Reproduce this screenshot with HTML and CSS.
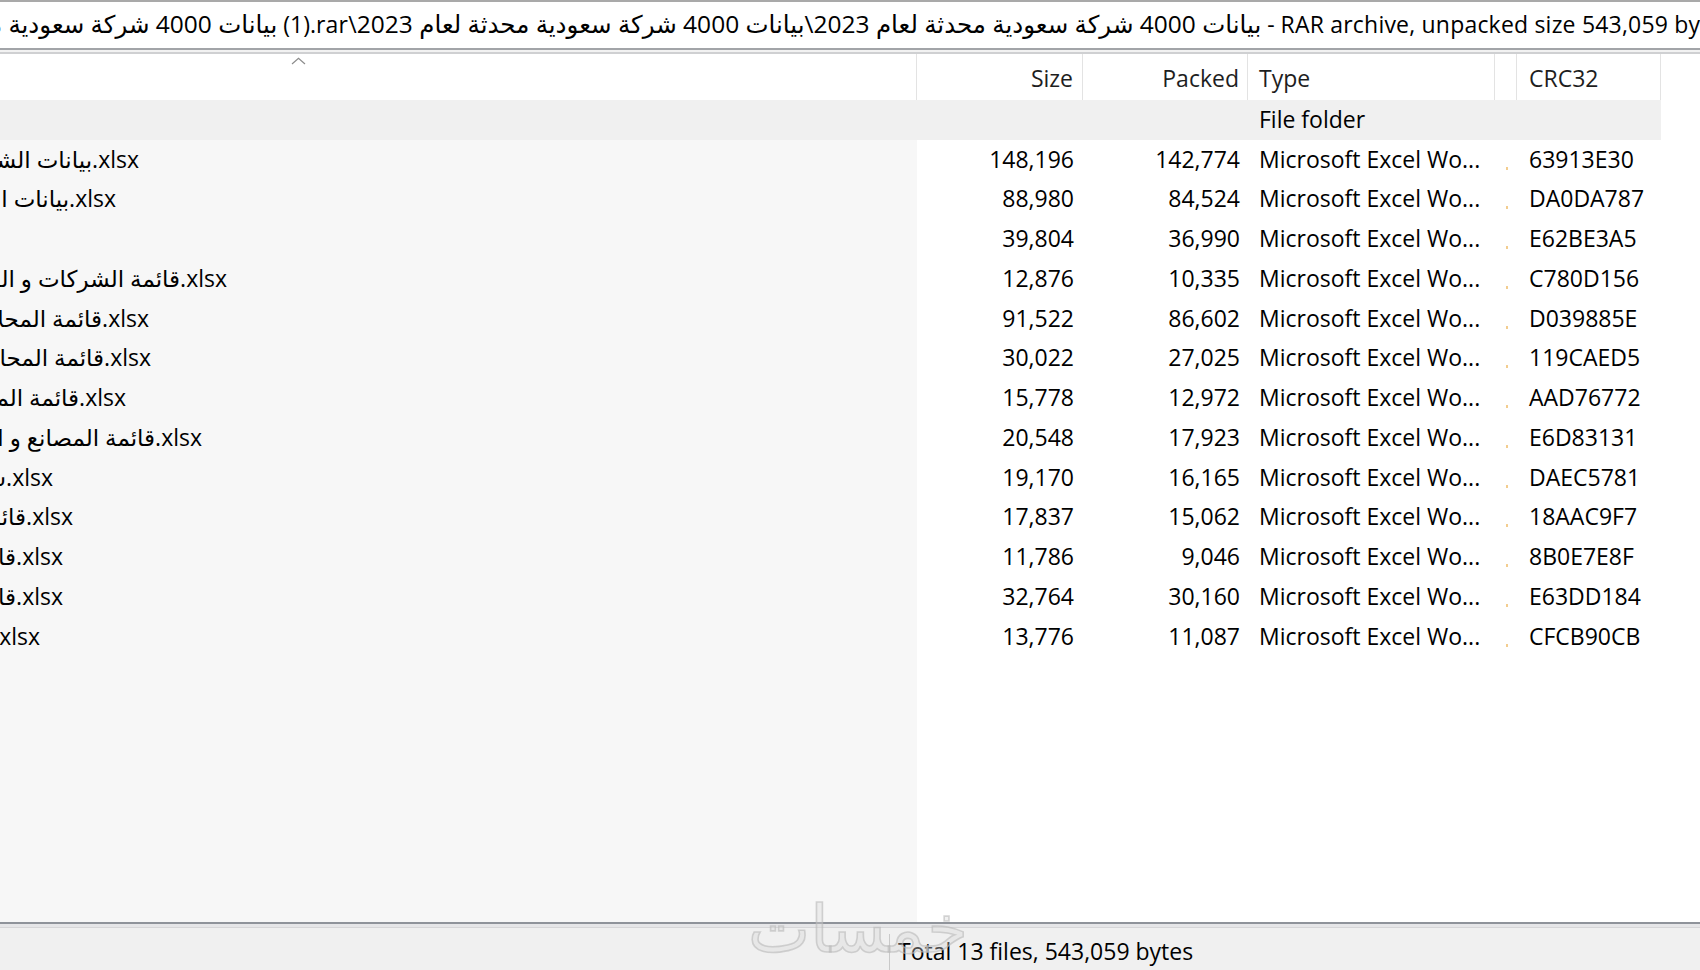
FILE: index.html
```html
<!DOCTYPE html>
<html lang="en">
<head>
<meta charset="utf-8">
<title>WinRAR</title>
<link rel="stylesheet" href="styles.css">
</head>
<body>
<div class="window">
  <div class="titlebar">
    <span class="title"><span class="ar">بيانات 4000 شركة سعودية محدثة لعام 2023</span>&lrm;<span class="lat"> (1).rar\</span><span class="ar">بيانات 4000 شركة سعودية محدثة لعام 2023\بيانات 4000 شركة سعودية محدثة لعام 2023</span><span class="lat"> - RAR archive, unpacked size 543,059 bytes</span></span>
  </div>
  <div class="sep"></div>
  <div class="list">
    <div class="row head">
      <div class="cell name"><svg class="sort" width="15" height="8" viewBox="0 0 15 8"><polyline points="1,7 7.5,1.2 14,7" fill="none" stroke="#8c8c8c" stroke-width="1.2"/></svg></div>
      <div class="cell num">Size</div>
      <div class="cell num pk">Packed</div>
      <div class="cell type">Type</div>
      <div class="cell mod"></div>
      <div class="cell crc">CRC32</div>
      <div class="cell rest"></div>
    </div>
    <div class="row folder">
      <div class="cell name"></div>
      <div class="cell num"></div>
      <div class="cell num pk"></div>
      <div class="cell type">File folder</div>
      <div class="cell mod"></div>
      <div class="cell crc"></div>
      <div class="cell rest"></div>
    </div>

    <div class="row"><div class="cell name"><div class="nm" style="width:139px"><span>بيانات الشركات السعودية.xlsx</span></div></div><div class="cell num">148,196</div><div class="cell num pk">142,774</div><div class="cell type">Microsoft Excel Wo...</div><div class="cell mod"><i class="dot"></i></div><div class="cell crc">63913E30</div><div class="cell rest"></div></div>
    <div class="row"><div class="cell name"><div class="nm" style="width:116px"><span>بيانات المصانع السعودية.xlsx</span></div></div><div class="cell num">88,980</div><div class="cell num pk">84,524</div><div class="cell type">Microsoft Excel Wo...</div><div class="cell mod"><i class="dot"></i></div><div class="cell crc">DA0DA787</div><div class="cell rest"></div></div>
    <div class="row"><div class="cell name"><div class="nm" style="width:0px"><span>دليل الشركات في المملكة العربية السعودية.xlsx</span></div></div><div class="cell num">39,804</div><div class="cell num pk">36,990</div><div class="cell type">Microsoft Excel Wo...</div><div class="cell mod"><i class="dot"></i></div><div class="cell crc">E62BE3A5</div><div class="cell rest"></div></div>
    <div class="row"><div class="cell name"><div class="nm" style="width:227px"><span>قائمة الشركات و المؤسسات.xlsx</span></div></div><div class="cell num">12,876</div><div class="cell num pk">10,335</div><div class="cell type">Microsoft Excel Wo...</div><div class="cell mod"><i class="dot"></i></div><div class="cell crc">C780D156</div><div class="cell rest"></div></div>
    <div class="row"><div class="cell name"><div class="nm" style="width:149px"><span>قائمة المحلات التجارية.xlsx</span></div></div><div class="cell num">91,522</div><div class="cell num pk">86,602</div><div class="cell type">Microsoft Excel Wo...</div><div class="cell mod"><i class="dot"></i></div><div class="cell crc">D039885E</div><div class="cell rest"></div></div>
    <div class="row"><div class="cell name"><div class="nm" style="width:151px"><span>قائمة المحامين في المملكة.xlsx</span></div></div><div class="cell num">30,022</div><div class="cell num pk">27,025</div><div class="cell type">Microsoft Excel Wo...</div><div class="cell mod"><i class="dot"></i></div><div class="cell crc">119CAED5</div><div class="cell rest"></div></div>
    <div class="row"><div class="cell name"><div class="nm" style="width:126px"><span>قائمة المستشفيات.xlsx</span></div></div><div class="cell num">15,778</div><div class="cell num pk">12,972</div><div class="cell type">Microsoft Excel Wo...</div><div class="cell mod"><i class="dot"></i></div><div class="cell crc">AAD76772</div><div class="cell rest"></div></div>
    <div class="row"><div class="cell name"><div class="nm" style="width:202px"><span>قائمة المصانع و الشركات.xlsx</span></div></div><div class="cell num">20,548</div><div class="cell num pk">17,923</div><div class="cell type">Microsoft Excel Wo...</div><div class="cell mod"><i class="dot"></i></div><div class="cell crc">E6D83131</div><div class="cell rest"></div></div>
    <div class="row"><div class="cell name"><div class="nm" style="width:53px"><span>شركات المقاولات.xlsx</span></div></div><div class="cell num">19,170</div><div class="cell num pk">16,165</div><div class="cell type">Microsoft Excel Wo...</div><div class="cell mod"><i class="dot"></i></div><div class="cell crc">DAEC5781</div><div class="cell rest"></div></div>
    <div class="row"><div class="cell name"><div class="nm" style="width:73px"><span>قائمة المطاعم.xlsx</span></div></div><div class="cell num">17,837</div><div class="cell num pk">15,062</div><div class="cell type">Microsoft Excel Wo...</div><div class="cell mod"><i class="dot"></i></div><div class="cell crc">18AAC9F7</div><div class="cell rest"></div></div>
    <div class="row"><div class="cell name"><div class="nm" style="width:63px"><span>قائمة الفنادق.xlsx</span></div></div><div class="cell num">11,786</div><div class="cell num pk">9,046</div><div class="cell type">Microsoft Excel Wo...</div><div class="cell mod"><i class="dot"></i></div><div class="cell crc">8B0E7E8F</div><div class="cell rest"></div></div>
    <div class="row"><div class="cell name"><div class="nm" style="width:63px"><span>قائمة المدارس.xlsx</span></div></div><div class="cell num">32,764</div><div class="cell num pk">30,160</div><div class="cell type">Microsoft Excel Wo...</div><div class="cell mod"><i class="dot"></i></div><div class="cell crc">E63DD184</div><div class="cell rest"></div></div>
    <div class="row"><div class="cell name"><div class="nm" style="width:40px"><span>قائمة المكاتب.xlsx</span></div></div><div class="cell num">13,776</div><div class="cell num pk">11,087</div><div class="cell type">Microsoft Excel Wo...</div><div class="cell mod"><i class="dot"></i></div><div class="cell crc">CFCB90CB</div><div class="cell rest"></div></div>

    <div class="row filler">
      <div class="cell name"></div>
      <div class="cell"></div><div class="cell"></div><div class="cell"></div><div class="cell"></div><div class="cell"></div><div class="cell"></div>
    </div>
  </div>
  <div class="sep2"></div>
  <div class="statusbar">
    <div class="sb-left"></div>
    <div class="sb-div"></div>
    <div class="sb-text">Total 13 files, 543,059 bytes</div>
  </div>
  <div class="watermark">خمسات</div>
</div>
</body>
</html>
```
FILE: styles.css
```css
* { box-sizing: border-box; }
html, body { margin: 0; padding: 0; }
body {
  background: #ffffff;
  font-family: "Open Sans", "DejaVu Sans", sans-serif;
  font-size: 23px;
  color: #000;
  overflow: hidden;
}
.window {
  position: relative;
  width: 1700px;
  height: 970px;
  display: flex;
  flex-direction: column;
  overflow: hidden;
}
.titlebar {
  height: 48px;
  flex: none;
  border-top: 2px solid #a9a9a9;
  display: flex;
  justify-content: flex-end;
  align-items: center;
  overflow: hidden;
  background: #fff;
}
.title {
  flex: none;
  white-space: nowrap;
  margin-right: -33px;
  padding-bottom: 3px;
}
.title .ar { font-size: 24.5px; }
.title .lat { letter-spacing: 0.2px; }
.sep {
  height: 6px;
  flex: none;
  background: #f2f2f2;
  border-top: 2px solid #a2a4a8;
  border-bottom: 2px solid #cfd0d2;
}
.list {
  flex: 1;
  display: flex;
  flex-direction: column;
  min-height: 0;
}
.row {
  display: grid;
  grid-template-columns: 917px 166px 165px 247px 22px 144px 1fr;
  height: 39.75px;
  flex: none;
  line-height: 39.75px;
}
.cell {
  overflow: hidden;
  white-space: nowrap;
}
.row .name {
  background: #f7f7f7;
  display: flex;
}
.num { text-align: right; padding-right: 9px; }
.num.pk { padding-right: 8px; }
.type { padding-left: 11px; }
.crc { padding-left: 12px; }
.mod {
  display: flex;
  justify-content: center;
  padding-left: 1px;
}
.dot {
  display: block;
  width: 2px;
  height: 3px;
  margin-top: 27px;
  background: #f3cd8f;
}

.nm {
  flex: none;
  display: flex;
  justify-content: flex-end;
}
.nm span { flex: none; white-space: nowrap; }

.head {
  height: 46px;
  line-height: 48px;
  color: #1e1e1e;
}
.head .name { background: #fff; padding-left: 291px; align-items: flex-start; }
.head .sort { margin-top: 3px; }
.head .cell:not(.rest) { border-right: 1px solid #e3e3e3; }
.head .mod { padding: 0; }

.folder { height: 39.5px; line-height: 39.5px; background: #f0f0f0; }
.folder .name { background: #f0f0f0; }
.folder .rest { background: #fff; }

.filler { flex: 1; height: auto; }

.sep2 {
  height: 6px;
  flex: none;
  background: #e6e6e8;
  border-top: 2px solid #8f939a;
  border-bottom: 1px solid #d6d6d8;
}
.statusbar {
  height: 42px;
  flex: none;
  background: #f0f0f0;
  display: flex;
  align-items: stretch;
}
.sb-left { width: 889px; flex: none; }
.sb-div { width: 1px; flex: none; background: #c9c9c9; margin-top: 6px; }
.sb-text { padding-left: 8px; padding-top: 4px; line-height: 38px; white-space: nowrap; }

.watermark {
  position: absolute;
  left: 748px;
  top: 893px;
  font-size: 66px;
  line-height: 1;
  color: rgba(215, 215, 215, 0.35);
  -webkit-text-stroke: 1.6px rgba(185, 185, 185, 0.6);
  pointer-events: none;
}
```
